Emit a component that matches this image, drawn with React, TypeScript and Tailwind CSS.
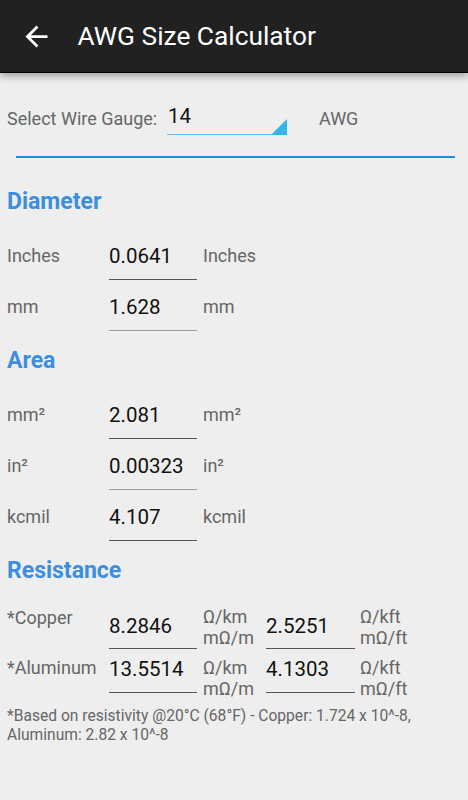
import React from "react";

const font = { fontFamily: "Roboto, 'Noto Sans', sans-serif" };

function Row({ label, value, unit, line = "bg-[#555]" }: { label: string; value: string; unit: string; line?: string }) {
  return (
    <div className="flex h-[51px]">
      <div className="w-[109px] pl-[7px] pt-[16px] text-[18px] leading-[22px] text-[#666]">{label}</div>
      <div className="flex w-[88px] flex-col">
        <div className="flex-1 pt-[15px] text-[20.5px] leading-[24px] text-[#111]">{value}</div>
        <div className={`h-px ${line}`} />
      </div>
      <div className="pl-[6px] pt-[16px] text-[18px] leading-[22px] text-[#666]">{unit}</div>
    </div>
  );
}

function Heading({ children }: { children: React.ReactNode }) {
  return (
    <div className="h-[28px] pl-[7px] text-[23px] font-bold leading-[28px] text-[#3c8fe0]">{children}</div>
  );
}

function ResRow({
  label,
  v1,
  v2,
  h,
  valPt,
  unitPt,
  labelPt,
}: {
  label: string;
  v1: string;
  v2: string;
  h: string;
  valPt: string;
  unitPt: string;
  labelPt: string;
}) {
  return (
    <div className={`flex ${h}`}>
      <div className={`w-[109px] pl-[7px] ${labelPt} text-[18px] leading-[22px] text-[#666]`}>{label}</div>
      <div className="flex w-[88px] flex-col">
        <div className={`flex-1 ${valPt} text-[20.5px] leading-[24px] text-[#111]`}>{v1}</div>
        <div className="h-px bg-[#555]" />
      </div>
      <div className={`w-[69px] pl-[6px] ${unitPt} text-[18px] leading-[21px] text-[#666]`}>
        <div>Ω/km</div>
        <div>mΩ/m</div>
      </div>
      <div className="flex w-[89px] flex-col">
        <div className={`flex-1 ${valPt} text-[20.5px] leading-[24px] text-[#111]`}>{v2}</div>
        <div className="h-px bg-[#555]" />
      </div>
      <div className={`pl-[5px] ${unitPt} text-[18px] leading-[21px] text-[#666]`}>
        <div>Ω/kft</div>
        <div>mΩ/ft</div>
      </div>
    </div>
  );
}

export default function App() {
  return (
    <div className="min-h-[800px] w-[468px] bg-[#eeeeee]" style={font}>
      <div className="relative z-10 flex h-[73px] items-center border-b border-black bg-[#212121] shadow-[0_3px_8px_rgba(0,0,0,0.35)]">
        <svg className="ml-[19.5px] mt-[1px]" width="33" height="33" viewBox="0 0 24 24" fill="#fff">
          <path d="M20 11H7.83l5.59-5.59L12 4l-8 8 8 8 1.41-1.41L7.83 13H20v-2z" />
        </svg>
        <div className="ml-[25px] text-[26.3px] leading-[32px] text-white">AWG Size Calculator</div>
      </div>

      <div className="flex h-[83px] items-start pt-[26px]">
        <div className="w-[167px] pl-[7px] pt-[9px] text-[18px] leading-[22px] text-[#666]">Select Wire Gauge:</div>
        <div className="relative h-[36px] w-[120px]">
          <div className="pl-[1px] pt-[5px] text-[20.5px] leading-[24px] text-[#111]">14</div>
          <div className="absolute bottom-0 left-0 h-px w-full bg-[#5ec4ee]" />
          <svg className="absolute bottom-0 right-0" width="16" height="16" viewBox="0 0 16 16">
            <polygon points="16,0 16,16 0,16" fill="#33b5e5" />
          </svg>
        </div>
        <div className="pl-[32px] pt-[9px] text-[18px] leading-[22px] text-[#666]">AWG</div>
      </div>

      <div className="ml-[16px] mr-[13px] h-[2px] bg-[#1e8ae5]" />

      <div className="mt-[30px] mb-[13px]">
        <Heading>Diameter</Heading>
      </div>
      <Row label="Inches" value="0.0641" unit="Inches" />
      <Row label="mm" value="1.628" unit="mm" line="bg-[#999]" />

      <div className="mt-[16px] mb-[13px]">
        <Heading>Area</Heading>
      </div>
      <Row label="mm²" value="2.081" unit="mm²" />
      <Row label="in²" value="0.00323" unit="in²" line="bg-[#999]" />
      <Row label="kcmil" value="4.107" unit="kcmil" />

      <div className="mt-[16px] mb-[13px]">
        <Heading>Resistance</Heading>
      </div>
      <ResRow label="*Copper" v1="8.2846" v2="2.5251" h="h-[51px]" valPt="pt-[16px]" unitPt="pt-[8px]" labelPt="pt-[9px]" />
      <ResRow label="*Aluminum" v1="13.5514" v2="4.1303" h="h-[44px]" valPt="pt-[8px]" unitPt="pt-[8px]" labelPt="pt-[8px]" />

      <div className="mt-[14px] px-[7px] text-[15.6px] leading-[19px] text-[#666]">
        *Based on resistivity @20°C (68°F) - Copper: 1.724 x 10^-8,
        <br />
        Aluminum: 2.82 x 10^-8
      </div>
    </div>
  );
}
